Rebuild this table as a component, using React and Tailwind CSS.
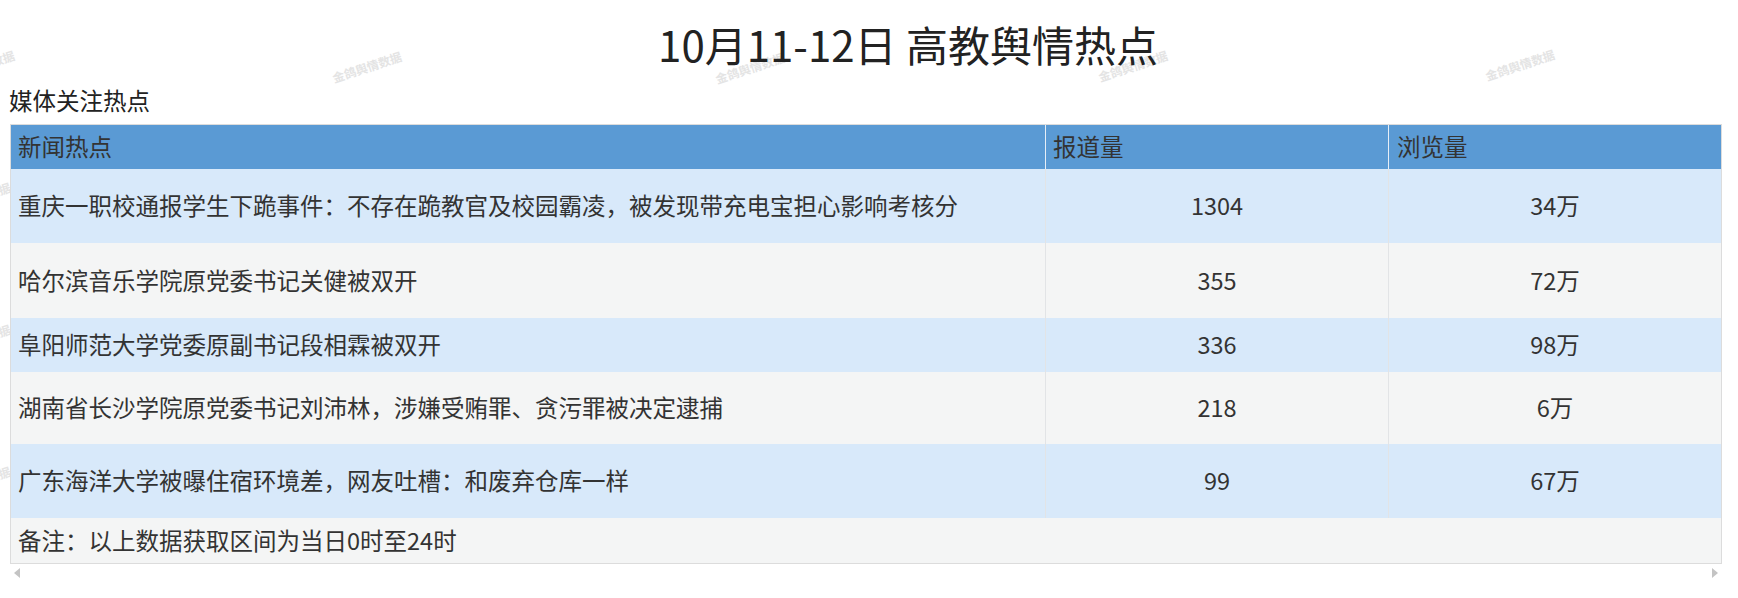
import React from 'react';

const rows = [
  { title: '重庆一职校通报学生下跪事件：不存在跪教官及校园霸凌，被发现带充电宝担心影响考核分', reports: '1304', views: '34万', h: 'h-[74px]', bg: 'bg-[#d8e9fa]' },
  { title: '哈尔滨音乐学院原党委书记关健被双开', reports: '355', views: '72万', h: 'h-[75px]', bg: 'bg-[#f4f5f5]' },
  { title: '阜阳师范大学党委原副书记段相霖被双开', reports: '336', views: '98万', h: 'h-[54px]', bg: 'bg-[#d8e9fa]' },
  { title: '湖南省长沙学院原党委书记刘沛林，涉嫌受贿罪、贪污罪被决定逮捕', reports: '218', views: '6万', h: 'h-[72px]', bg: 'bg-[#f4f5f5]' },
  { title: '广东海洋大学被曝住宿环境差，网友吐槽：和废弃仓库一样', reports: '99', views: '67万', h: 'h-[74px]', bg: 'bg-[#d8e9fa]' },
];

// faint watermark tiles, the table covers most of them
const marks = [
  [-20, 66], [367, 67], [750, 68], [1133, 66], [1520, 65],
  [-24, 198], [-24, 340], [-24, 482],
];

function Watermarks() {
  return (
    <div className="absolute inset-0 overflow-hidden pointer-events-none">
      {marks.map(([x, y], i) => (
        <span
          key={i}
          className="absolute text-[12px] font-bold text-[#e4e4e4] whitespace-nowrap -rotate-[18deg] -translate-x-1/2 -translate-y-1/2"
          style={{ left: x, top: y }}
        >
          金鸽舆情数据
        </span>
      ))}
    </div>
  );
}

export default function App() {
  return (
    <div className="relative w-[1738px] h-[598px] bg-white font-['Noto_Sans_CJK_SC','Noto_Sans',sans-serif] text-[#333]">
      <Watermarks />

      <div className="relative">
        <h1 className="h-[86px] flex items-center justify-center pl-[78px] text-[42px] text-[#222] font-normal">
          10月11-12日 高教舆情热点
        </h1>
        <div className="h-[28px] leading-[28px] pl-[9px] text-[23.5px] text-[#222]">媒体关注热点</div>

        <div className="mt-[10px] ml-[10px] w-[1712px] border border-[#dcdcdc] text-[23.5px] bg-[#f4f5f5]">
          <div className="flex h-[44px] bg-[#5a9ad4] items-center">
            <div className="w-[1035px] h-full flex items-center pl-[7px] border-r border-[#e6eef7]">新闻热点</div>
            <div className="w-[343px] h-full flex items-center pl-[7px] border-r border-[#e6eef7]">报道量</div>
            <div className="flex-1 h-full flex items-center pl-[8px]">浏览量</div>
          </div>

          {rows.map((r) => (
            <div key={r.title} className={`flex ${r.h} ${r.bg}`}>
              <div className="w-[1035px] flex items-center pl-[7px] border-r border-[#e2e4e6]">{r.title}</div>
              <div className="w-[343px] flex items-center justify-center border-r border-[#e2e4e6]">{r.reports}</div>
              <div className="flex-1 flex items-center justify-center">{r.views}</div>
            </div>
          ))}

          <div className="h-[45px] flex items-center pl-[7px]">备注：以上数据获取区间为当日0时至24时</div>
        </div>

        <div className="ml-[14px] w-[1704px] h-[18px] flex items-center justify-between">
          <span className="w-0 h-0 border-y-[5px] border-y-transparent border-r-[6px] border-r-[#c4c4c4]"></span>
          <span className="w-0 h-0 border-y-[5px] border-y-transparent border-l-[6px] border-l-[#c4c4c4]"></span>
        </div>
      </div>
    </div>
  );
}
